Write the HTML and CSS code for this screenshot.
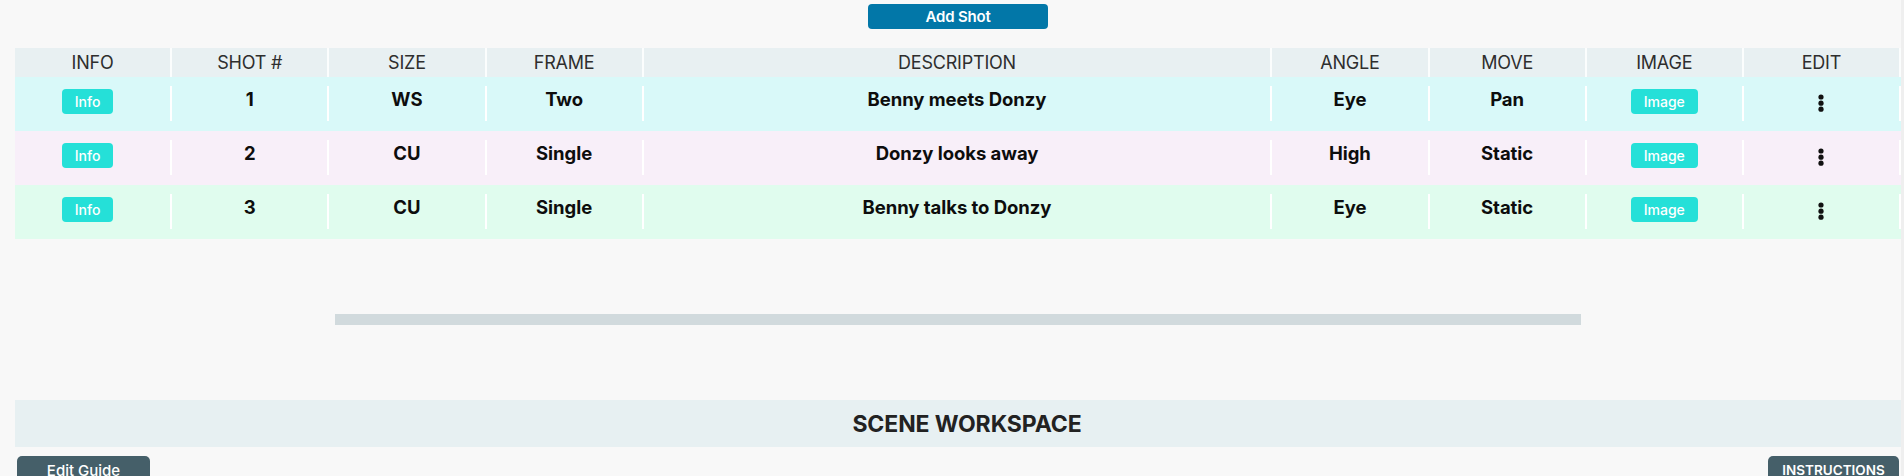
FILE: index.html
```html
<!DOCTYPE html>
<html lang="en">
<head>
<meta charset="utf-8">
<title>Scene Workspace</title>
<link rel="stylesheet" href="styles.css">
</head>
<body>
<div class="page">
  <main class="content">
    <div class="toolbar">
      <button class="btn-add">Add Shot</button>
    </div>

    <div class="shot-table">
      <div class="row head">
        <div class="hcell">INFO</div>
        <div class="hcell">SHOT #</div>
        <div class="hcell">SIZE</div>
        <div class="hcell">FRAME</div>
        <div class="hcell">DESCRIPTION</div>
        <div class="hcell">ANGLE</div>
        <div class="hcell">MOVE</div>
        <div class="hcell">IMAGE</div>
        <div class="hcell">EDIT</div>
      </div>

      <div class="row shot shot-cyan">
        <div class="cell"><div class="inner"><button class="pill pill-info">Info</button></div></div>
        <div class="cell"><div class="inner"><span class="val">1</span></div></div>
        <div class="cell"><div class="inner"><span class="val">WS</span></div></div>
        <div class="cell"><div class="inner"><span class="val">Two</span></div></div>
        <div class="cell"><div class="inner"><span class="val">Benny meets Donzy</span></div></div>
        <div class="cell"><div class="inner"><span class="val">Eye</span></div></div>
        <div class="cell"><div class="inner"><span class="val">Pan</span></div></div>
        <div class="cell"><div class="inner"><button class="pill">Image</button></div></div>
        <div class="cell"><div class="inner"><svg class="kebab" width="8" height="18" viewBox="0 0 8 18"><circle cx="4" cy="3" r="2.6"/><circle cx="4" cy="9.2" r="2.6"/><circle cx="4" cy="15.2" r="2.6"/></svg></div></div>
      </div>

      <div class="row shot shot-lilac">
        <div class="cell"><div class="inner"><button class="pill pill-info">Info</button></div></div>
        <div class="cell"><div class="inner"><span class="val">2</span></div></div>
        <div class="cell"><div class="inner"><span class="val">CU</span></div></div>
        <div class="cell"><div class="inner"><span class="val">Single</span></div></div>
        <div class="cell"><div class="inner"><span class="val">Donzy looks away</span></div></div>
        <div class="cell"><div class="inner"><span class="val">High</span></div></div>
        <div class="cell"><div class="inner"><span class="val">Static</span></div></div>
        <div class="cell"><div class="inner"><button class="pill">Image</button></div></div>
        <div class="cell"><div class="inner"><svg class="kebab" width="8" height="18" viewBox="0 0 8 18"><circle cx="4" cy="3" r="2.6"/><circle cx="4" cy="9.2" r="2.6"/><circle cx="4" cy="15.2" r="2.6"/></svg></div></div>
      </div>

      <div class="row shot shot-mint">
        <div class="cell"><div class="inner"><button class="pill pill-info">Info</button></div></div>
        <div class="cell"><div class="inner"><span class="val">3</span></div></div>
        <div class="cell"><div class="inner"><span class="val">CU</span></div></div>
        <div class="cell"><div class="inner"><span class="val">Single</span></div></div>
        <div class="cell"><div class="inner"><span class="val">Benny talks to Donzy</span></div></div>
        <div class="cell"><div class="inner"><span class="val">Eye</span></div></div>
        <div class="cell"><div class="inner"><span class="val">Static</span></div></div>
        <div class="cell"><div class="inner"><button class="pill">Image</button></div></div>
        <div class="cell"><div class="inner"><svg class="kebab" width="8" height="18" viewBox="0 0 8 18"><circle cx="4" cy="3" r="2.6"/><circle cx="4" cy="9.2" r="2.6"/><circle cx="4" cy="15.2" r="2.6"/></svg></div></div>
      </div>
    </div>

    <div class="scroll-track">
      <div class="scroll-thumb"></div>
    </div>

    <div class="scene-bar">SCENE WORKSPACE</div>

    <div class="footer">
      <button class="btn-slate btn-guide">Edit Guide</button>
      <button class="btn-slate btn-instr">INSTRUCTIONS</button>
    </div>
  </main>
  <div class="edge"></div>
</div>
</body>
</html>
```

FILE: styles.css
```css
* {
  box-sizing: border-box;
}

html, body {
  margin: 0;
  padding: 0;
  height: 100%;
  overflow: hidden;
}

body {
  background: #f8f8f8;
  font-family: Inter, "Noto Sans", "Liberation Sans", sans-serif;
  color: #111;
}

.page {
  display: flex;
  min-height: 100%;
}

.content {
  flex: 1;
  padding-left: 15px;
  min-width: 0;
}

.edge {
  width: 3px;
  background: #efefef;
}

.toolbar {
  display: flex;
  justify-content: center;
  padding-top: 4px;
}

button {
  font-family: inherit;
  border: none;
  cursor: pointer;
}

.btn-add {
  width: 180px;
  height: 25px;
  background: #0277a8;
  color: #fff;
  border-radius: 4px;
  font-size: 15px;
  font-weight: 600;
  letter-spacing: -0.2px;
  padding: 0;
}

.shot-table {
  margin-top: 19px;
}

.row {
  display: grid;
  grid-template-columns: 1fr 1fr 1fr 1fr 4fr 1fr 1fr 1fr 1fr;
}

.head {
  background: #e8f0f2;
  height: 29px;
}

.hcell {
  display: flex;
  align-items: center;
  justify-content: center;
  border-right: 2px solid #fbfdfd;
  font-size: 18px;
  font-weight: 400;
  color: #2e2e2e;
  letter-spacing: -0.2px;
}

.shot {
  height: 54px;
}

.shot-cyan { background: #d9f9f9; }
.shot-lilac { background: #f8eff9; }
.shot-mint { background: #e0fcee; }

.cell {
  padding: 9px 0 10px;
}

.inner {
  height: 100%;
  border-right: 2px solid #ffffff;
  display: flex;
  align-items: center;
  justify-content: center;
}

.val {
  font-size: 18.5px;
  font-weight: 700;
  line-height: 22px;
  margin-bottom: 9px;
  color: #0d0d0d;
  letter-spacing: -0.05px;
}

.pill {
  height: 25px;
  padding: 0 13px;
  border-radius: 4px;
  background: #25e0d8;
  color: #fff;
  font-size: 14px;
  font-weight: 500;
  margin-bottom: 4px;
}

.pill-info {
  margin-right: 10px;
}

.kebab {
  fill: #111;
  margin-bottom: 2px;
}

.scroll-track {
  display: flex;
  justify-content: center;
  margin-top: 75px;
}

.scroll-thumb {
  width: 1246px;
  height: 11px;
  background: #d1dadd;
}

.scene-bar {
  margin-top: 75px;
  height: 47px;
  background: #e7f0f2;
  display: flex;
  align-items: center;
  justify-content: center;
  padding-left: 18px;
  font-size: 23px;
  font-weight: 700;
  color: #222;
  letter-spacing: -0.1px;
}

.footer {
  display: flex;
  justify-content: space-between;
  padding: 9px 2px 0;
}

.btn-slate {
  height: 28px;
  background: #455f69;
  color: #fff;
  border-radius: 5px;
  padding: 0;
}

.btn-guide {
  width: 133px;
  font-size: 15px;
  font-weight: 500;
}

.btn-instr {
  width: 131px;
  font-size: 13.5px;
  font-weight: 600;
}
```
